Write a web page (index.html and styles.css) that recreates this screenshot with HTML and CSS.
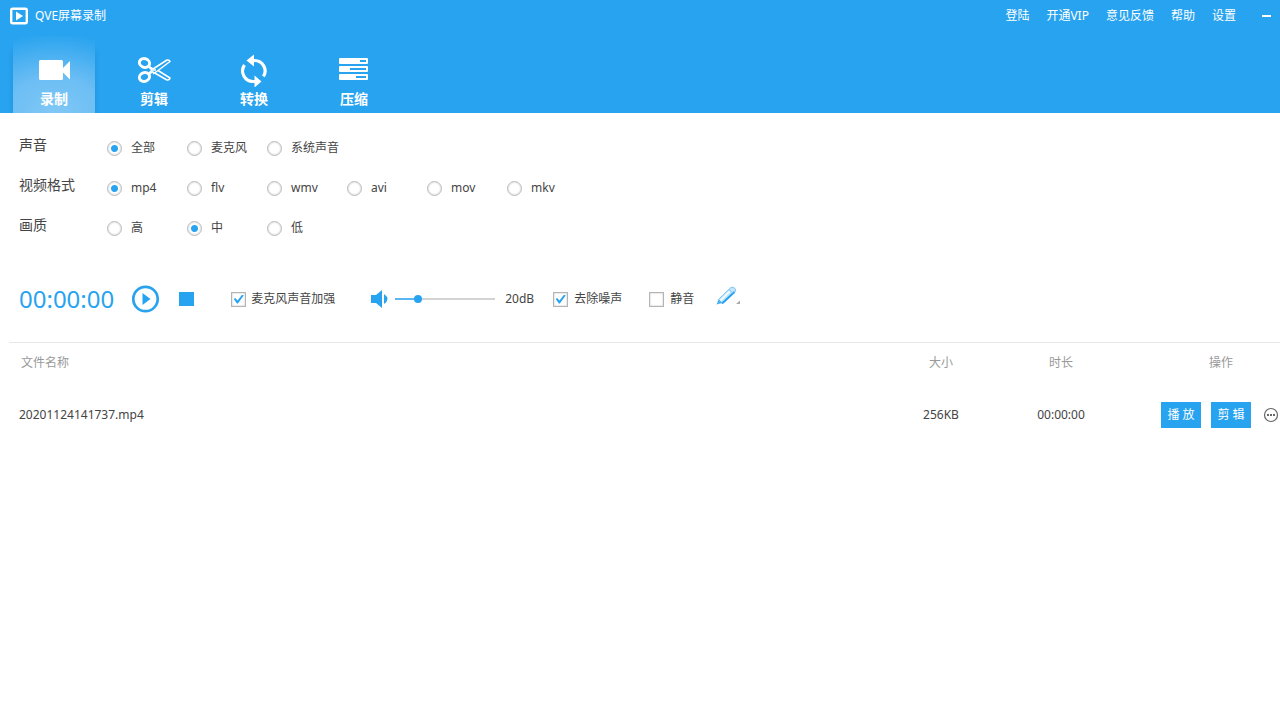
FILE: index.html
```html
<!DOCTYPE html>
<html lang="zh-CN">
<head>
<meta charset="utf-8">
<meta name="viewport" content="width=device-width, initial-scale=1">
<title>QVE屏幕录制</title>
<link rel="stylesheet" href="styles.css">
</head>
<body>
<header class="header">
  <div class="titlebar">
    <svg class="logo" width="18" height="18" viewBox="0 0 18 18" aria-hidden="true"><rect x="1.2" y="1.700" width="15.600" height="14.600" rx="1.5" fill="none" stroke="#fff" stroke-width="2.400"/><path d="M6 4.5v9L13 9z" fill="#fff"/></svg>
    <h1 class="title">QVE屏幕录制</h1>
    <nav class="links">
      <a class="link" href="#">登陆</a>
      <a class="link" href="#">开通VIP</a>
      <a class="link" href="#">意见反馈</a>
      <a class="link" href="#">帮助</a>
      <a class="link" href="#">设置</a>
    </nav>
    <button class="minimize" aria-label="最小化"></button>
  </div>
  <nav class="tabs">
    <button class="tab tab-active">
      <svg width="34" height="34" viewBox="0 0 34 34" aria-hidden="true"><path d="M3.500 7h21q1.500 0 1.500 1.500v17q0 1.500-1.500 1.500H3.500Q2 27 2 25.500v-17Q2 7 3.500 7zM25 16l8-8v18.500l-8-8z" fill="#fff"/></svg>
      <span>录制</span>
    </button>
    <button class="tab">
      <svg width="34" height="34" viewBox="0 0 34 34" aria-hidden="true" fill="none" stroke="#fff"><ellipse cx="7.500" cy="10" rx="5.200" ry="4.300" stroke-width="3" transform="rotate(20 7.500 10)"/><ellipse cx="7.500" cy="24" rx="5.200" ry="4.300" stroke-width="3" transform="rotate(-20 7.500 24)"/><path d="M12 13.500l4 2.500L30 7q2.500-.5 3 1.500L21 17.500l-5 3.500M12 21l4-2.500M21 17.500l12 7.500q-.5 2.500-3 2L16 19" stroke-width="1.500" stroke-linejoin="round"/><path d="M12 14.500l3 2.500-3 3M15 17h4" stroke-width="1.500"/></svg>
      <span>剪辑</span>
    </button>
    <button class="tab">
      <svg width="34" height="34" viewBox="0 0 34 34" aria-hidden="true"><g fill="none" stroke="#fff" stroke-width="3.200"><path d="M16 7.500h1.500A10.500 10.500 0 0 1 26.500 23.500"/><path d="M7.500 12A10.500 10.500 0 0 0 16.500 28.500H18"/></g><path d="M17 1.500v12L9.500 7.500zM17.500 22.500v12l7-6z" fill="#fff"/></svg>
      <span>转换</span>
    </button>
    <button class="tab">
      <svg width="34" height="34" viewBox="0 0 34 34" aria-hidden="true"><path d="M3 5h27q1 0 1 1v4q0 1-1 1H3q-1 0-1-1V6q0-1 1-1zM3 13h27q1 0 1 1v4q0 1-1 1H3q-1 0-1-1v-4q0-1 1-1zM3 21h27q1 0 1 1v4q0 1-1 1H3q-1 0-1-1v-4q0-1 1-1z" fill="#fff"/><path d="M23 7h6v2h-6zM13 15h16v2H13zM19 23h10v2H19z" fill="#28a3ef"/></svg>
      <span>压缩</span>
    </button>
  </nav>
</header>
<main>
  <section class="settings">
    <div class="row" role="radiogroup" aria-labelledby="g-sound">
      <span class="row-name" id="g-sound">声音</span>
      <label class="option"><input class="radio" type="radio" name="sound" checked>全部</label>
      <label class="option"><input class="radio" type="radio" name="sound">麦克风</label>
      <label class="option"><input class="radio" type="radio" name="sound">系统声音</label>
    </div>
    <div class="row" role="radiogroup" aria-labelledby="g-format">
      <span class="row-name" id="g-format">视频格式</span>
      <label class="option"><input class="radio" type="radio" name="format" checked>mp4</label>
      <label class="option"><input class="radio" type="radio" name="format">flv</label>
      <label class="option"><input class="radio" type="radio" name="format">wmv</label>
      <label class="option"><input class="radio" type="radio" name="format">avi</label>
      <label class="option"><input class="radio" type="radio" name="format">mov</label>
      <label class="option"><input class="radio" type="radio" name="format">mkv</label>
    </div>
    <div class="row" role="radiogroup" aria-labelledby="g-quality">
      <span class="row-name" id="g-quality">画质</span>
      <label class="option"><input class="radio" type="radio" name="quality">高</label>
      <label class="option"><input class="radio" type="radio" name="quality" checked>中</label>
      <label class="option"><input class="radio" type="radio" name="quality">低</label>
    </div>
  </section>
  <section class="controls">
    <time class="timer">00:00:00</time>
    <button class="icon-button play" aria-label="开始"><svg width="28" height="28" viewBox="0 0 28 28" aria-hidden="true"><circle cx="13.500" cy="14" r="12.200" fill="none" stroke="#28a3ef" stroke-width="2.700"/><path d="M10.500 8v12l8-6z" fill="#28a3ef"/></svg></button>
    <button class="icon-button stop" aria-label="停止"><svg width="15" height="14" viewBox="0 0 15 14" aria-hidden="true"><path d="M0 0h15v14H0z" fill="#28a3ef"/></svg></button>
    <label class="check boost"><input class="checkbox" type="checkbox" checked>麦克风声音加强</label>
    <svg class="speaker" width="18" height="20" viewBox="0 0 18 20" aria-hidden="true"><path d="M0 6h5l6-5v18l-6-5H0zM13 5q7 5 0 10z" fill="#28a3ef"/></svg>
    <input class="slider" id="gain" type="range" min="0" max="100" value="20" aria-label="音量">
    <output class="gain" for="gain">20dB</output>
    <label class="check denoise"><input class="checkbox" type="checkbox" checked>去除噪声</label>
    <label class="check mute"><input class="checkbox" type="checkbox">静音</label>
    <button class="icon-button pen" aria-label="画笔"><svg width="24" height="20" viewBox="0 0 24 20" aria-hidden="true"><path d="M2.500 13.500L14.500 1.800q2-1.500 4 .2t.5 4L6.500 17.500z" fill="#c3e6fb" stroke="#7cc5f5"/><path d="M6 17.500L18.500 6" stroke="#28a3ef" stroke-width="2"/><path d="M4.500 14.500L13.500 5.500" stroke="#fff" stroke-width="1.500"/><path d="M13 3.500l4 4" stroke="#7cc5f5"/><path d="M2.500 13.500L.5 18.500l6-1.500z" fill="#4db1f1"/><path d="M24 14.500V18h-4z" fill="#aaa"/></svg></button>
  </section>
  <table class="files">
    <thead>
      <tr><th class="col-name">文件名称</th><th class="col-data">大小</th><th class="col-data">时长</th><th class="col-actions">操作</th></tr>
    </thead>
    <tbody>
      <tr>
        <td class="col-name">20201124141737.mp4</td><td class="col-data">256KB</td><td class="col-data">00:00:00</td>
        <td class="col-actions"><div class="actions">
          <button class="action">播 放</button>
          <button class="action">剪 辑</button>
          <button class="icon-button more" aria-label="更多"><svg width="16" height="16" viewBox="0 0 16 16" aria-hidden="true"><circle cx="8" cy="8" r="6.500" fill="none" stroke="#666" stroke-width="1.200"/><path d="M4 7h2v2H4zM7 7h2v2H7zM10 7h2v2h-2z" fill="#666"/></svg></button>
        </div></td>
      </tr>
    </tbody>
  </table>
</main>
</body>
</html>
```

FILE: styles.css
```css
* {
  box-sizing: border-box;
}

body {
  margin: 0;
  background: #fff;
  color: #444;
  font: 12px/16px "Noto Sans", "Noto Sans CJK SC", sans-serif;
}

button {
  border: 0;
  padding: 0;
  background: none;
  color: inherit;
  font: inherit;
  cursor: pointer;
}

input {
  margin: 0;
}

svg {
  display: block;
}

.header {
  background: #28a3ef;
  color: #fff;
}

.titlebar {
  display: flex;
  align-items: center;
  height: 32px;
  padding: 0 9px 0 10px;
}

.title {
  margin: 0 auto 0 7px;
  font-size: 12px;
  font-weight: 400;
}

.links {
  display: flex;
  gap: 17px;
}

.link {
  color: #fff;
  text-decoration: none;
}

.minimize {
  width: 9px;
  height: 2px;
  margin-left: 26px;
  background: #fff;
}

.tabs {
  display: flex;
  gap: 18px;
  padding: 4px 13px 0;
}

.tab {
  display: flex;
  flex-direction: column;
  align-items: center;
  gap: 2px;
  width: 82px;
  height: 77px;
  padding-top: 17px;
  font-size: 14px;
  font-weight: 700;
  line-height: 20px;
}

.tab-active {
  background: radial-gradient(ellipse 110px 80px at 50% 100%, #80c8f6, #6cbef4 45%, #28a3ef);
  box-shadow: 0 14px 5px #2291d8;
  clip-path: inset(0 -5px 0 -5px);
}

.settings {
  padding: 15px 19px 0;
}

.row {
  display: flex;
  align-items: center;
  height: 40px;
}

.row-name {
  width: 88px;
  padding-bottom: 6px;
  font-size: 14px;
  line-height: 20px;
}

.option {
  display: flex;
  align-items: center;
  gap: 9px;
  width: 80px;
  white-space: nowrap;
}

.radio {
  appearance: none;
  width: 15px;
  height: 15px;
  flex: none;
  border: 1px solid #bbb;
  border-radius: 50%;
  background: #fff;
  box-shadow: inset 0 0 2px #bbb;
}

.radio:checked {
  background: radial-gradient(circle, #28a3ef 3px, #fff 4px);
}

.controls {
  display: flex;
  align-items: center;
  height: 62px;
  margin: 20px 0 12px;
  padding-left: 19px;
}

.timer {
  color: #28a3ef;
  font-size: 24px;
  line-height: 32px;
}

.play {
  margin-left: 18px;
}

.stop {
  margin-left: 19px;
}

.check {
  display: flex;
  align-items: center;
  gap: 6px;
}

.checkbox {
  appearance: none;
  display: grid;
  place-items: center;
  width: 15px;
  height: 15px;
  border: 1px solid #b4b4b4;
  background: #fff;
  box-shadow: inset 0 0 2px #bbb;
}

.checkbox:checked::before {
  content: "";
  width: 10px;
  height: 9px;
  background: #28a3ef;
  clip-path: polygon(0 50%, 15% 38%, 38% 68%, 85% 0, 100% 12%, 42% 100%, 32% 100%);
}

.boost {
  gap: 5px;
  margin-left: 37px;
}

.speaker {
  margin-left: 36px;
}

.slider {
  appearance: none;
  width: 100px;
  height: 8px;
  margin-left: 6px;
  background: linear-gradient(90deg, #58b7f3 20%, #d3d3d3 20%) center / 100% 2px no-repeat;
}

.slider::-webkit-slider-thumb {
  appearance: none;
  width: 8px;
  height: 8px;
  border-radius: 50%;
  background: #28a3ef;
}

.gain {
  margin-left: 10px;
}

.denoise {
  margin-left: 19px;
}

.mute {
  margin-left: 27px;
}

.pen {
  margin: 0 0 6px 22px;
}

.files {
  width: calc(100% - 9px);
  margin-left: 9px;
  border-top: 1px solid #e8e8e8;
  border-collapse: separate;
  border-spacing: 0;
  table-layout: fixed;
}

.files th {
  height: 40px;
  padding: 0;
  color: #999;
  font-weight: 400;
}

.files td {
  height: 64px;
  padding: 0;
}

.files .col-name {
  padding-left: 10px;
  text-align: left;
}

.files th.col-name {
  padding-left: 12px;
}

.col-data {
  width: 120px;
  text-align: center;
}

.files .col-actions {
  width: 159px;
  padding-left: 40px;
  text-align: left;
}

.files th.col-actions {
  padding-left: 88px;
}

.actions {
  display: flex;
  align-items: center;
}

.action {
  width: 40px;
  height: 26px;
  margin-right: 10px;
  background: #28a3ef;
  color: #fff;
}

.more {
  margin-left: 2px;
}
```
